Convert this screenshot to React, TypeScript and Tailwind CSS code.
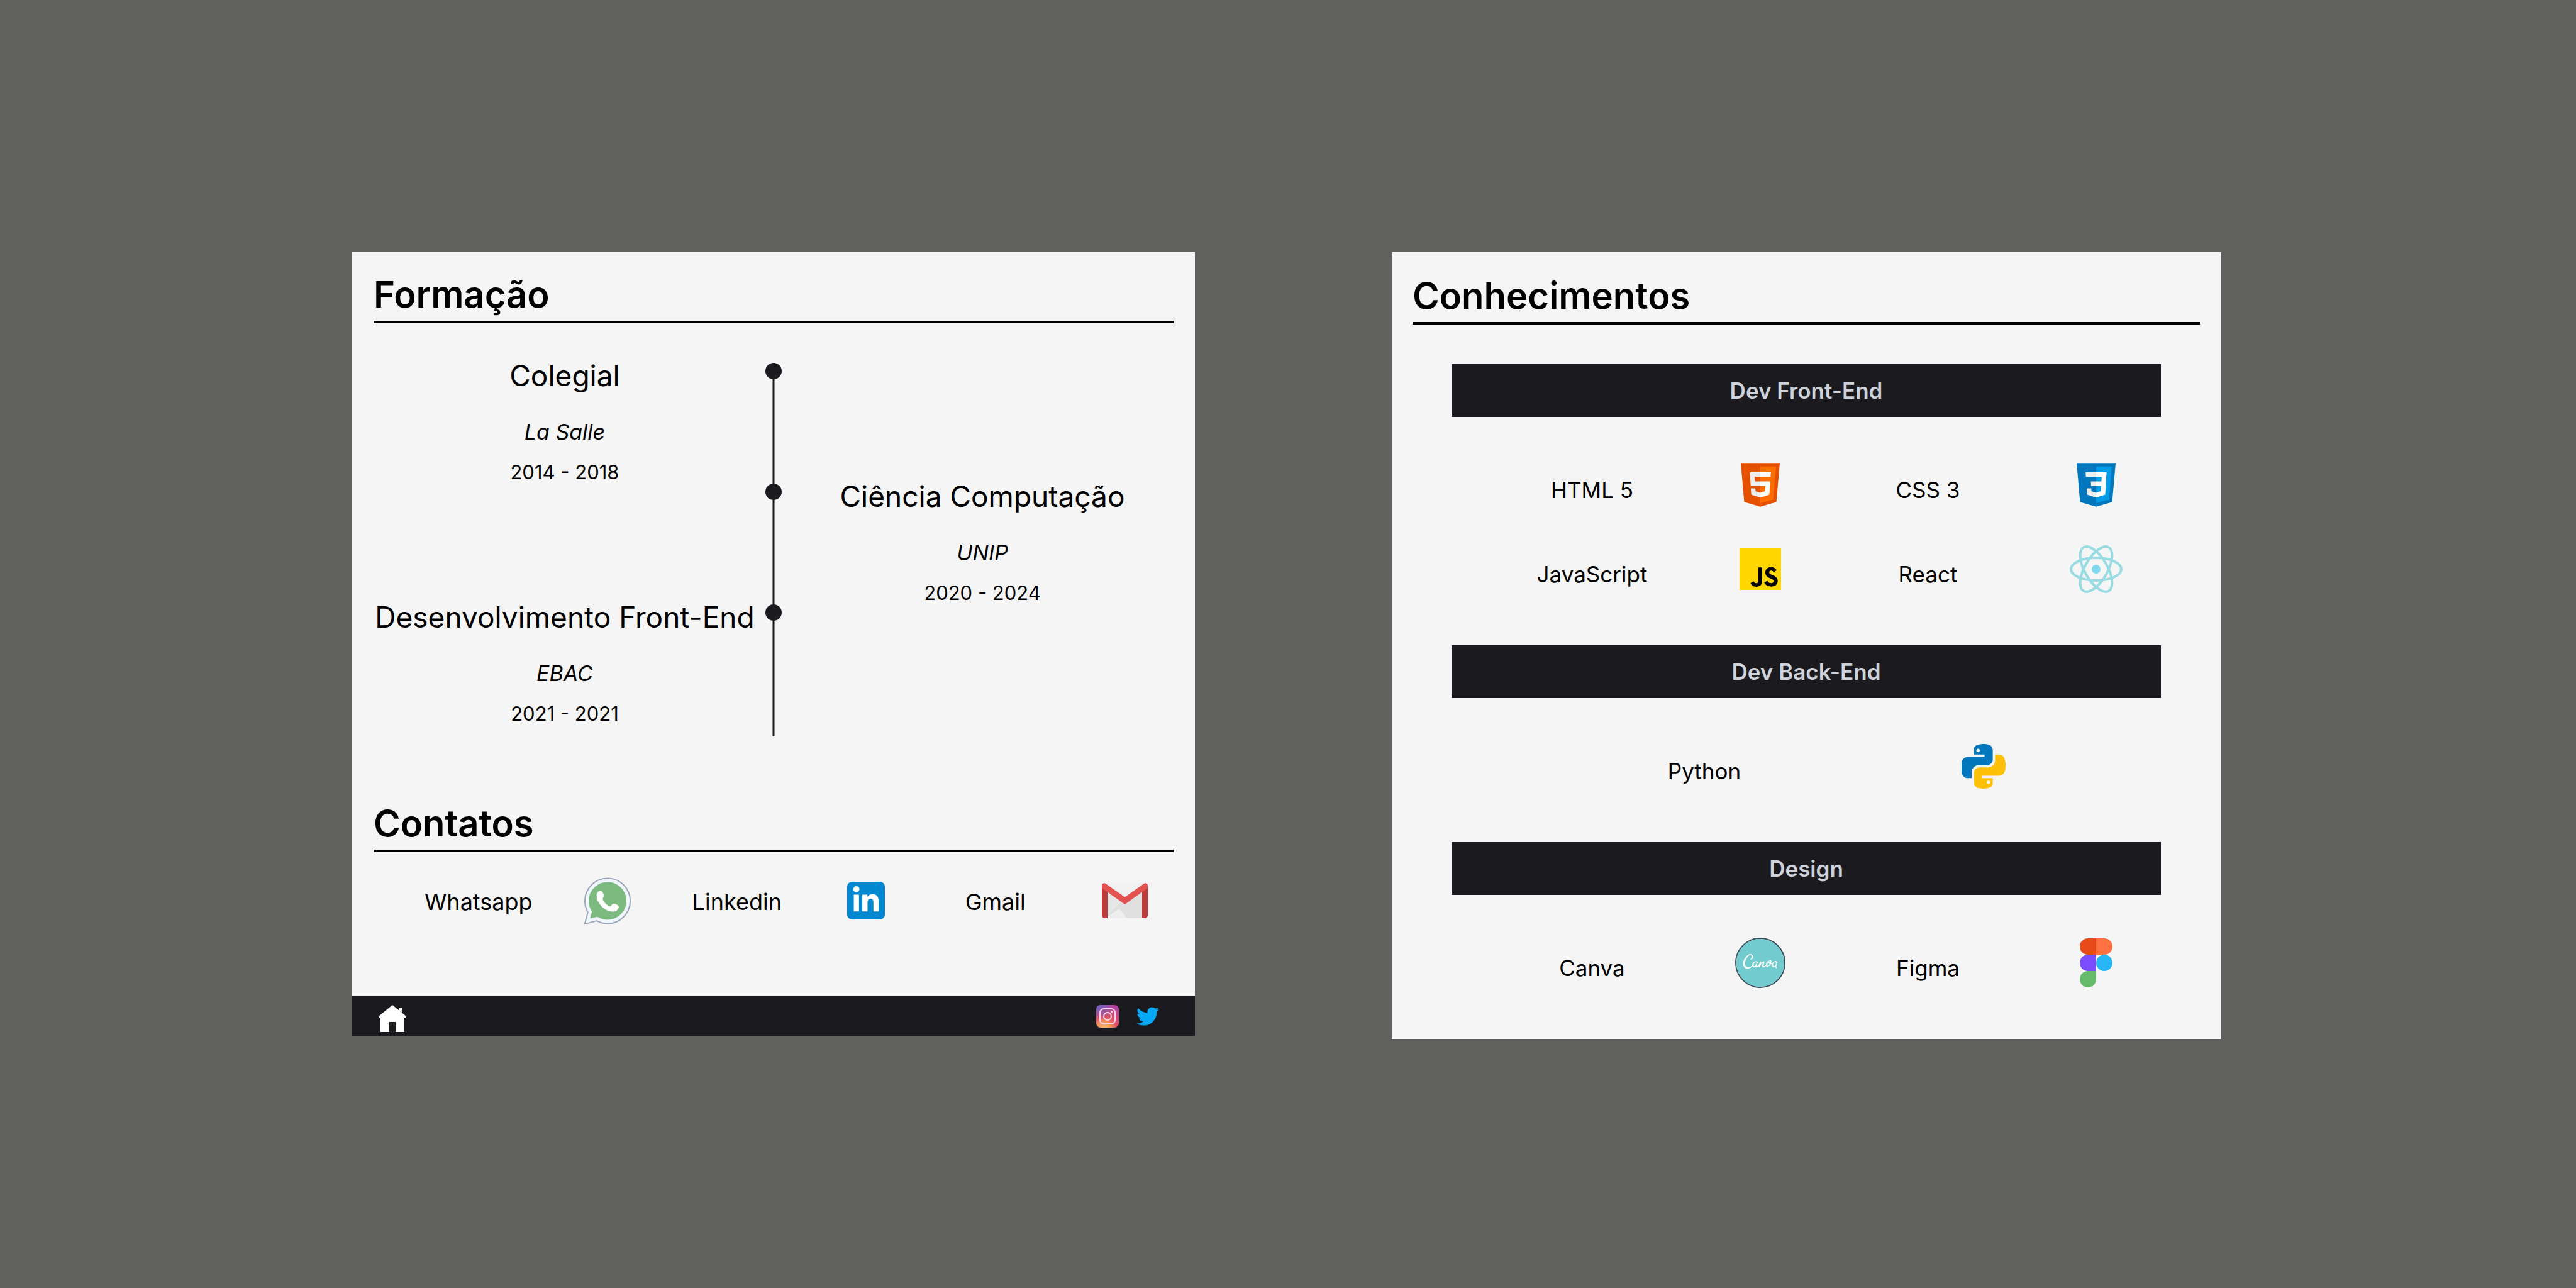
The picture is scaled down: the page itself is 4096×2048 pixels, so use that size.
import React from 'react';
import type { ReactNode } from 'react';
import { SiCanva, SiJavascript } from 'react-icons/si';
import { FaLinkedinIn, FaTwitter } from 'react-icons/fa';

function WhatsappIcon() {
  return (
    <svg viewBox="4 4 40 40" className="h-[77px] w-[76px]" aria-hidden="true">
      <path
        fill="#f0f6fe"
        stroke="#99a3b6"
        strokeWidth="1"
        strokeLinejoin="round"
        d="M4.868,43.303l2.694-9.835C5.9,30.59,5.026,27.324,5.027,23.979C5.032,13.514,13.548,5,24.014,5c5.079,0.002,9.845,1.979,13.43,5.566c3.584,3.588,5.558,8.356,5.556,13.428c-0.004,10.465-8.522,18.98-18.986,18.98h-0.008c-3.177-0.001-6.3-0.798-9.073-2.311L4.868,43.303z"
      />
      <path
        fill="#7cba80"
        d="M35.176,12.832c-2.98-2.982-6.941-4.625-11.157-4.626c-8.704,0-15.783,7.076-15.787,15.774c-0.001,2.981,0.833,5.883,2.413,8.396l0.376,0.597l-1.595,5.821l5.973-1.566l0.577,0.342c2.422,1.438,5.2,2.198,8.032,2.199h0.006c8.698,0,15.777-7.077,15.78-15.776C39.795,19.778,38.156,15.814,35.176,12.832z"
      />
      <path
        fill="#ffffff"
        d="M15 20.500C14.600 17.500 16 15.700 18 15.500C19.600 15.400 20.800 18 20.800 19.800C20.800 21 19.900 21.600 20 22.600C20.600 24.800 23.500 27.800 25.800 28.600C27 28.800 27.300 27 28.800 26.400C30.500 26 33.400 27.600 33.400 29C33.300 31.400 31.500 32.800 28.500 33C22.500 33.200 15.600 27 15 20.500z"
      />
    </svg>
  );
}

function LinkedinIcon() {
  return (
    <span className="flex size-[60px] items-center justify-center rounded-lg bg-[#0288d1]">
      <FaLinkedinIn className="size-[46px] text-white" aria-hidden="true" />
    </span>
  );
}

function GmailIcon() {
  return (
    <svg viewBox="0 0 73 56" className="h-14 w-[73px]" aria-hidden="true">
      <path fill="#f1f1f1" d="M5 0h63v56H5z" />
      <path fill="#e0e0e0" d="M8 12l29 20 28-20v44H8z" />
      <path fill="#e7e7e7" d="M8 12l24 17-24 23z" />
      <path fill="#eeeeee" d="M8 56v-2l20-13 12 15z" />
      <path fill="#bd3b3d" d="M0 5l9 7v44H5c-3 0-5-2-5-5z" />
      <path fill="#bd3b3d" d="M73 5l-9 7v44h4c3 0 5-2 5-5z" />
      <path fill="#e15250" d="M0 4c0-3 3-5 6-3l30.500 21.500L67 1c3-2 6 0 6 3v4L36.500 34 0 8z" />
    </svg>
  );
}

function HomeIcon() {
  return (
    <svg viewBox="0 0 44 44" className="size-11" fill="#ffffff" aria-hidden="true">
      <path d="M22 0L44 18l-1 2h-2v23H27V27H17v16H3V20H1l-1-2z" />
      <path d="M32 4h5v8l-5-4z" />
    </svg>
  );
}

function InstagramIcon() {
  return (
    <svg viewBox="0 0 36 36" className="size-9" aria-hidden="true">
      <defs>
        <radialGradient id="ig-warm" cx="0.35" cy="1.05" r="1">
          <stop offset="0" stopColor="#fdc06d" />
          <stop offset="0.300" stopColor="#f5925c" />
          <stop offset="0.550" stopColor="#e04f5f" />
          <stop offset="1" stopColor="#b5429c" />
        </radialGradient>
        <radialGradient id="ig-cool" cx="0.1" cy="0" r="0.7">
          <stop offset="0" stopColor="#6a62c4" />
          <stop offset="1" stopColor="#6a62c4" stopOpacity="0" />
        </radialGradient>
      </defs>
      <rect width="36" height="36" rx="7" fill="url(#ig-warm)" />
      <rect width="36" height="36" rx="7" fill="url(#ig-cool)" />
      <g fill="none" stroke="#fbd5ea" strokeWidth="2">
        <rect x="6" y="6" width="24" height="24" rx="6" />
        <circle cx="18" cy="18" r="6" />
      </g>
      <circle cx="25" cy="11" r="1.500" fill="#fbd5ea" />
    </svg>
  );
}

function HtmlIcon() {
  return (
    <svg viewBox="7 5 34 38" className="h-[70px] w-[62px]" aria-hidden="true">
      <path fill="#e65100" d="M41 5H7l3 34 14 4 14-4z" />
      <path fill="#ff6d00" d="M24 8v31.900l11.200-3.200L37.700 8z" />
      <path fill="#ffffff" d="M24 25v-4h8.600l-.7 11.500-7.900 2.600v-4.200l4.100-1.400.3-4.500zM32.900 17l.3-4H24v4z" />
      <path fill="#eeeeee" d="M24 30.900v4.200l-7.900-2.600-.4-5.500h4l.2 2.500zM19.100 17H24v-4h-9.100l.7 12H24v-4h-4.600z" />
    </svg>
  );
}

function CssIcon() {
  return (
    <svg viewBox="7 5 34 38" className="h-[70px] w-[62px]" aria-hidden="true">
      <path fill="#0277bd" d="M41 5H7l3 34 14 4 14-4z" />
      <path fill="#039be5" d="M24 8v31.900l11.200-3.200L37.700 8z" />
      <path fill="#ffffff" d="M33.100 13H24v4h4.900l-.3 4H24v4h4.400l-.3 4.500-4.100 1.400v4.200l7.900-2.600.7-11.500z" />
      <path fill="#eeeeee" d="M24 13v4h-8.900l-.3-4zM19.400 21l.2 4H24v-4zM19.800 27h-4l.3 5.500 7.900 2.600v-4.200l-4.100-1.400z" />
    </svg>
  );
}

function ReactIcon() {
  return (
    <svg viewBox="-42 -40 84 80" className="h-20 w-[84px]" aria-hidden="true">
      <g fill="none" stroke="#99dbe2" strokeWidth="4">
        <ellipse rx="40" ry="18" />
        <ellipse rx="40" ry="18" transform="rotate(60)" />
        <ellipse rx="40" ry="18" transform="rotate(120)" />
      </g>
      <circle r="7" fill="#80d8ee" />
    </svg>
  );
}

function PythonIcon() {
  return (
    <svg viewBox="5 5 38 38" className="size-[71px]" aria-hidden="true">
      <path
        fill="#0277bd"
        d="M24.047,5c-1.555,0.005-2.633,0.142-3.936,0.367c-3.848,0.670-4.549,2.077-4.549,4.670V14h9v2H15.220h-4.350c-2.636,0-4.943,1.242-5.674,4.219c-0.826,3.417-0.863,5.557,0,9.125C5.851,32.005,7.294,34,9.931,34h3.632v-5.104c0-2.966,2.686-5.896,5.764-5.896h7.236c2.523,0,5-1.862,5-4.377v-8.586c0-2.439-1.759-4.263-4.218-4.672C27.406,5.359,25.589,4.994,24.047,5z M19.063,9c0.821,0,1.500,0.677,1.500,1.502c0,0.833-0.679,1.498-1.500,1.498c-0.837,0-1.500-0.664-1.500-1.498C17.563,9.680,18.226,9,19.063,9z"
      />
      <path
        fill="#ffc107"
        d="M23.078,43c1.555-0.005,2.633-0.142,3.936-0.367c3.848-0.670,4.549-2.077,4.549-4.670V34h-9v-2h9.343h4.350c2.636,0,4.943-1.242,5.674-4.219c0.826-3.417,0.863-5.557,0-9.125C41.274,15.995,39.831,14,37.194,14h-3.632v5.104c0,2.966-2.686,5.896-5.764,5.896h-7.236c-2.523,0-5,1.862-5,4.377v8.586c0,2.439,1.759,4.263,4.218,4.672C19.719,42.641,21.536,43.006,23.078,43z M28.063,39c-0.821,0-1.500-0.677-1.500-1.502c0-0.833,0.679-1.498,1.500-1.498c0.837,0,1.500,0.664,1.500,1.498C29.563,38.320,28.899,39,28.063,39z"
      />
    </svg>
  );
}

function FigmaIcon() {
  return (
    <svg viewBox="0 0 52 78" className="h-[78px] w-[52px]" aria-hidden="true">
      <path fill="#e64a19" d="M26 0H13a13 13 0 0 0 0 26h13z" />
      <path fill="#ff7043" d="M26 0h13a13 13 0 0 1 0 26H26z" />
      <path fill="#7c4dff" d="M26 26H13a13 13 0 0 0 0 26h13z" />
      <circle cx="39" cy="39" r="13" fill="#29b6f6" />
      <path fill="#66bb6a" d="M13 52h13v13a13 13 0 1 1-13-13z" />
    </svg>
  );
}

function JavascriptIcon() {
  return (
    <span className="flex bg-black">
      <SiJavascript className="size-[66px] text-[#ffd600]" aria-hidden="true" />
    </span>
  );
}

function CanvaIcon() {
  return (
    <span className="flex rounded-full border-2 border-[#37505c] bg-white">
      <SiCanva className="size-[76px] text-[#72cccf]" aria-hidden="true" />
    </span>
  );
}

function SectionTitle({ children }: { children: ReactNode }) {
  return (
    <h2 className="border-b-4 border-black pb-2 text-[58px] leading-[68px] font-semibold">{children}</h2>
  );
}

type Course = { title: string; school: string; years: string; side: 'left' | 'right' };

const courses: Course[] = [
  { title: 'Colegial', school: 'La Salle', years: '2014 - 2018', side: 'left' },
  { title: 'Ciência Computação', school: 'UNIP', years: '2020 - 2024', side: 'right' },
  { title: 'Desenvolvimento Front-End', school: 'EBAC', years: '2021 - 2021', side: 'left' },
];

function CourseEntry({ course }: { course: Course }) {
  const column = course.side === 'left' ? 'col-start-1' : 'col-start-3';
  return (
    <li className="grid h-48 grid-cols-[minmax(0,1fr)_56px_minmax(0,1fr)]">
      <div className={`${column} row-start-1 text-center whitespace-nowrap`}>
        <h3 className="text-[46px] leading-[40px]">{course.title}</h3>
        <p className="mt-12 text-[34px] leading-[44px] italic">{course.school}</p>
        <p className="mt-5 text-[31px] leading-[44px]">{course.years}</p>
      </div>
      <span className="col-start-2 row-start-1 size-[26px] justify-self-center rounded-full bg-[#1b1b1f]" />
    </li>
  );
}

const contacts = [
  { name: 'Whatsapp', icon: <WhatsappIcon /> },
  { name: 'Linkedin', icon: <LinkedinIcon /> },
  { name: 'Gmail', icon: <GmailIcon /> },
];

function EducationCard() {
  return (
    <section className="flex flex-col bg-[#f5f5f5]">
      <div className="px-[34px] pt-[33px]">
        <SectionTitle>Formação</SectionTitle>
        <div className="relative mt-[63px] pb-[18px]">
          <span className="absolute inset-y-0 left-1/2 w-[3px] -translate-x-1/2 bg-[#1b1b1f]" />
          <ol className="relative">
            {courses.map((course) => (
              <CourseEntry key={course.title} course={course} />
            ))}
          </ol>
        </div>
      </div>
      <div className="px-[34px] pt-[104px]">
        <SectionTitle>Contatos</SectionTitle>
      </div>
      <ul className="mt-8 mr-[9px] ml-[98px] grid grid-cols-3">
        {contacts.map((contact) => (
          <li key={contact.name}>
            <a href="#contatos" className="grid h-[90px] grid-cols-2 place-items-center">
              <span className="pt-1 text-[36px] leading-[44px]">{contact.name}</span>
              {contact.icon}
            </a>
          </li>
        ))}
      </ul>
      <footer className="mt-[106px] flex h-16 items-center border-t border-[#8a8a8a] bg-[#1b1b1f] pr-[57px] pl-[42px]">
        <a href="#inicio" aria-label="Início" className="mr-auto pt-2">
          <HomeIcon />
        </a>
        <a href="#instagram" aria-label="Instagram" className="mr-7">
          <InstagramIcon />
        </a>
        <a href="#twitter" aria-label="Twitter">
          <FaTwitter className="size-9 text-[#03a9f4]" />
        </a>
      </footer>
    </section>
  );
}

const groups = [
  {
    title: 'Dev Front-End',
    wide: true,
    skills: [
      { name: 'HTML 5', icon: <HtmlIcon /> },
      { name: 'CSS 3', icon: <CssIcon /> },
      { name: 'JavaScript', icon: <JavascriptIcon /> },
      { name: 'React', icon: <ReactIcon /> },
    ],
  },
  { title: 'Dev Back-End', wide: false, skills: [{ name: 'Python', icon: <PythonIcon /> }] },
  {
    title: 'Design',
    wide: true,
    skills: [
      { name: 'Canva', icon: <CanvaIcon /> },
      { name: 'Figma', icon: <FigmaIcon /> },
    ],
  },
];

function SkillsCard() {
  return (
    <section className="bg-[#f5f5f5] pb-[54px]">
      <div className="px-[33px] pt-[35px] pb-[63px]">
        <SectionTitle>Conhecimentos</SectionTitle>
      </div>
      <div className="flex flex-col gap-[54px]">
        {groups.map((group) => (
          <div key={group.title}>
            <h3 className="mx-[95px] bg-[#1b1b1f] text-center text-[35px] leading-[84px] font-semibold text-[#ced2da]">
              {group.title}
            </h3>
            <ul
              className={`mt-[41px] mr-[65px] ml-[185px] grid ${group.wide ? 'grid-cols-2' : 'grid-cols-1 px-[90px]'}`}
            >
              {group.skills.map((skill) => (
                <li key={skill.name} className="grid h-[134px] grid-cols-2 place-items-center">
                  <span className="pt-4 text-[35px] leading-[44px]">{skill.name}</span>
                  {skill.icon}
                </li>
              ))}
            </ul>
          </div>
        ))}
      </div>
    </section>
  );
}

export default function App() {
  return (
    <main className="grid min-h-screen grid-cols-[1340fr_1318fr] items-start gap-[313px] bg-[#60605e] pt-[401px] pr-[565px] pl-[560px] font-['Inter',sans-serif] text-black">
      <EducationCard />
      <SkillsCard />
    </main>
  );
}
